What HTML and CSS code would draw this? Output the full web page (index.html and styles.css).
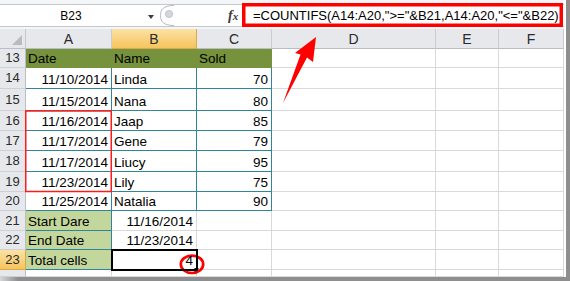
FILE: index.html
```html
<!DOCTYPE html>
<html>
<head>
<meta charset="utf-8">
<link rel="stylesheet" href="styles.css">
</head>
<body>
<div class="frame">
  <div class="main">
    <div class="content">
      <div class="toolbar">
        <div class="bar">
          <div class="namebox"><span class="nb-text">B23</span><span class="dd"></span></div>
          <div class="pill">
            <svg width="18" height="21" viewBox="0 0 18 21">
              <path d="M17 0.5 C 6 0.5 3.5 5 3.5 10.5 C 3.5 16 6 20.5 17 20.5" fill="#fff" stroke="#b3b9c0" stroke-width="1"/>
              <circle cx="12" cy="9" r="3.6" fill="#d3d6da" stroke="#b8bdc3" stroke-width="0.8"/>
            </svg>
          </div>
          <div class="fx"><span class="fx-f">f</span><span class="fx-x">x</span></div>
          <div class="formula">=COUNTIFS(A14:A20,"&gt;="&amp;B21,A14:A20,"&lt;="&amp;B22)</div>
        </div>
      </div>
      <div class="sheet">
        <div class="corner"></div>
        <div class="ch">A</div><div class="ch hl">B</div><div class="ch">C</div><div class="ch">D</div><div class="ch">E</div><div class="ch">F</div>

        <div class="rh">13</div><div class="c g">Date</div><div class="c g">Name</div><div class="c g">Sold</div><div class="c"></div><div class="c"></div><div class="c"></div>
        <div class="rh">14</div><div class="c t r">11/10/2014</div><div class="c t">Linda</div><div class="c t r">70</div><div class="c"></div><div class="c"></div><div class="c"></div>
        <div class="rh">15</div><div class="c t r">11/15/2014</div><div class="c t">Nana</div><div class="c t r">80</div><div class="c"></div><div class="c"></div><div class="c"></div>
        <div class="rh">16</div><div class="c t r">11/16/2014</div><div class="c t">Jaap</div><div class="c t r">85</div><div class="c"></div><div class="c"></div><div class="c"></div>
        <div class="rh">17</div><div class="c t r">11/17/2014</div><div class="c t">Gene</div><div class="c t r">79</div><div class="c"></div><div class="c"></div><div class="c"></div>
        <div class="rh">18</div><div class="c t r">11/17/2014</div><div class="c t">Liucy</div><div class="c t r">95</div><div class="c"></div><div class="c"></div><div class="c"></div>
        <div class="rh">19</div><div class="c t r">11/23/2014</div><div class="c t">Lily</div><div class="c t r">75</div><div class="c"></div><div class="c"></div><div class="c"></div>
        <div class="rh">20</div><div class="c t r">11/25/2014</div><div class="c t">Natalia</div><div class="c t r">90</div><div class="c"></div><div class="c"></div><div class="c"></div>
        <div class="rh">21</div><div class="c lg">Start Dare</div><div class="c r">11/16/2014</div><div class="c"></div><div class="c"></div><div class="c"></div><div class="c"></div>
        <div class="rh">22</div><div class="c lg">End Date</div><div class="c r">11/23/2014</div><div class="c"></div><div class="c"></div><div class="c"></div><div class="c"></div>
        <div class="rh hl">23</div><div class="c lg">Total cells</div><div class="c r sel">4</div><div class="c"></div><div class="c"></div><div class="c"></div><div class="c"></div>
        <div class="rh"></div><div class="c"></div><div class="c"></div><div class="c"></div><div class="c"></div><div class="c"></div><div class="c"></div>
      </div>
    </div>
    <div class="edge-right"></div>
  </div>
  <div class="edge-bottom"></div>
  <svg class="marks" width="570" height="281" viewBox="0 0 570 281">
    <rect x="243.75" y="4.75" width="317.5" height="20.5" fill="none" stroke="#ff0000" stroke-width="3.5"/>
    <rect x="25.75" y="111" width="85.5" height="80.5" fill="none" stroke="#ff1a1a" stroke-width="1.5"/>
    <polygon points="316,37 313,62 307,57.5 283,103 300.5,54.5 295,53" fill="#ff0000"/>
    <rect x="194" y="267.5" width="5" height="5" fill="#000" stroke="#fff" stroke-width="1"/>
    <ellipse cx="192" cy="264.3" rx="11.2" ry="8.7" fill="none" stroke="#ff0000" stroke-width="2.7"/>
  </svg>
</div>
</body>
</html>
```

FILE: styles.css
```css
html, body {
  margin: 0;
  padding: 0;
  background: #fff;
}

.frame {
  position: relative;
  width: 570px;
  height: 281px;
  overflow: hidden;
  display: flex;
  flex-direction: column;
  font-family: "Liberation Sans", Arial, sans-serif;
  color: #000;
}

.main {
  display: flex;
  height: 277px;
}

.content {
  width: 564px;
  display: flex;
  flex-direction: column;
}

.edge-right {
  width: 4px;
  border-left: 2px solid #fff;
  background: #8e8e8e;
}

.edge-bottom {
  height: 4px;
  background: linear-gradient(to right, #d8d8d8 0px, #8e8e8e 18px, #8e8e8e 100%);
}

/* toolbar / formula bar */
.toolbar {
  height: 29px;
  box-sizing: border-box;
  padding-top: 4px;
  background: #f4f5f7;
}

.bar {
  height: 23px;
  box-sizing: border-box;
  border-top: 1px solid #c3c8ce;
  border-bottom: 1px solid #c3c8ce;
  background: #fff;
  display: flex;
  align-items: center;
}

.namebox {
  width: 157px;
  height: 100%;
  display: flex;
  align-items: center;
  font-size: 12px;
}

.nb-text {
  width: 142px;
  text-align: center;
}

.dd {
  width: 0;
  height: 0;
  border-left: 3.5px solid transparent;
  border-right: 3.5px solid transparent;
  border-top: 4px solid #3c3c3c;
  margin-left: 6px;
  margin-top: 2px;
}

.pill {
  width: 18px;
  height: 21px;
  display: flex;
}

.fx {
  width: 68px;
  padding-left: 53px;
  box-sizing: border-box;
  font-family: "Liberation Serif", "Times New Roman", serif;
  font-style: italic;
  font-weight: bold;
  color: #3a3a3a;
  font-size: 14px;
  line-height: 14px;
}

.fx-x {
  font-size: 11px;
}

.formula {
  padding-left: 10px;
  font-size: 13px;
  white-space: nowrap;
  margin-top: -1px;
}

/* sheet grid */
.sheet {
  display: grid;
  grid-template-columns: 26px 86px 85px 75px 164px 63px 65px;
  grid-template-rows: 20px 19px 21px 22px 20px 20px 21px 20px 19px 20px 19px 20px 7px;
  font-size: 13.5px;
  line-height: 16px;
}

.corner {
  background: #e6e8eb;
  border-right: 1px solid #c2c7cd;
  border-bottom: 1px solid #b9bec5;
  position: relative;
  overflow: hidden;
}

.corner::after {
  content: "";
  position: absolute;
  right: 3px;
  bottom: 3px;
  width: 0;
  height: 0;
  border-left: 10px solid transparent;
  border-bottom: 10px solid #b7bcc2;
}

.ch {
  background: #e6e8eb;
  border-right: 1px solid #c9cdd2;
  border-bottom: 1px solid #b9bec5;
  display: flex;
  align-items: center;
  justify-content: center;
  font-size: 14px;
  color: #2b2b2b;
}

.rh {
  background: #e6e8eb;
  border-right: 1px solid #b9bec5;
  border-bottom: 1px solid #cdd1d6;
  display: flex;
  align-items: center;
  justify-content: center;
  font-size: 13px;
  color: #2b2b2b;
}

.hl {
  background: linear-gradient(#fbe2a6, #f6c45c);
  border-color: #dba94d;
}

.c {
  box-sizing: border-box;
  border-right: 1px solid #d9d9d9;
  border-bottom: 1px solid #d9d9d9;
  display: flex;
  align-items: flex-end;
  padding: 0 3px 0 2px;
  white-space: nowrap;
  overflow: hidden;
}

.r {
  justify-content: flex-end;
}

.g {
  background: #76923c;
  border-color: #76923c;
}

.t {
  border-right-color: #31849b;
  border-bottom-color: #31849b;
}

.lg {
  background: #c3d69b;
  border-right-color: #31849b;
  border-bottom-color: #31849b;
}

.sel {
  outline: 2px solid #000;
  outline-offset: -1px;
  position: relative;
  z-index: 1;
}

.marks {
  position: absolute;
  left: 0;
  top: 0;
  pointer-events: none;
}
```
